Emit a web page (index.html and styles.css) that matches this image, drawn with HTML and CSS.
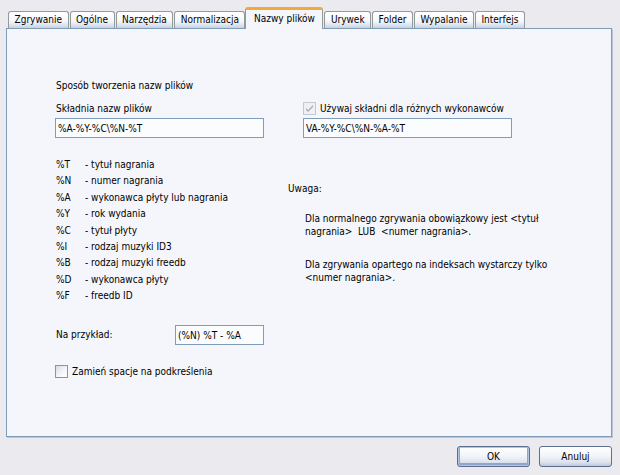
FILE: index.html
```html
<!DOCTYPE html>
<html lang="pl">
<head>
<meta charset="utf-8">
<title>Nazwy plików</title>
<link rel="stylesheet" href="styles.css">
</head>
<body>
<div class="dialog">
  <div class="tabs">
    <div class="tab">Zgrywanie</div>
    <div class="tab">Ogólne</div>
    <div class="tab">Narzędzia</div>
    <div class="tab">Normalizacja</div>
    <div class="tab active">Nazwy plików</div>
    <div class="tab">Urywek</div>
    <div class="tab">Folder</div>
    <div class="tab">Wypalanie</div>
    <div class="tab">Interfejs</div>
  </div>
  <div class="panel">
    <div class="title">Sposób tworzenia nazw plików</div>
    <div class="syntax">
      <div class="col">
        <div class="label">Składnia nazw plików</div>
        <div class="input">%A-%Y-%C\%N-%T</div>
      </div>
      <div class="col">
        <div class="check">
          <span class="box checked"><svg width="11" height="11" viewBox="0 0 11 11"><path d="M2 5 L4 7 L9 2 L9 4 L4 9 L2 7 Z" fill="#a9b0ba"/></svg></span>
          <span class="check-text">Używaj składni dla różnych wykonawców</span>
        </div>
        <div class="input">VA-%Y-%C\%N-%A-%T</div>
      </div>
    </div>
    <div class="info">
      <ul class="codes">
        <li><span class="code">%T</span><span>- tytuł nagrania</span></li>
        <li><span class="code">%N</span><span>- numer nagrania</span></li>
        <li><span class="code">%A</span><span>- wykonawca płyty lub nagrania</span></li>
        <li><span class="code">%Y</span><span>- rok wydania</span></li>
        <li><span class="code">%C</span><span>- tytuł płyty</span></li>
        <li><span class="code">%I</span><span>- rodzaj muzyki ID3</span></li>
        <li><span class="code">%B</span><span>- rodzaj muzyki freedb</span></li>
        <li><span class="code">%D</span><span>- wykonawca płyty</span></li>
        <li><span class="code">%F</span><span>- freedb ID</span></li>
      </ul>
      <div class="notes">
        <p class="note-title">Uwaga:</p>
        <p class="note">Dla normalnego zgrywania obowiązkowy jest &lt;tytuł<br>nagrania&gt;&nbsp; LUB &nbsp;&lt;numer nagrania&gt;.</p>
        <p class="note second">Dla zgrywania opartego na indeksach wystarczy tylko<br>&lt;numer nagrania&gt;.</p>
      </div>
    </div>
    <div class="example">
      <span class="ex-label">Na przykład:</span>
      <div class="input small">(%N) %T - %A</div>
    </div>
    <div class="check bottom">
      <span class="box"></span>
      <span class="check-text">Zamień spacje na podkreślenia</span>
    </div>
  </div>
  <div class="buttons">
    <button class="btn default">OK</button>
    <button class="btn">Anuluj</button>
  </div>
</div>
</body>
</html>
```

FILE: styles.css
```css
* { box-sizing: border-box; }
html, body {
  margin: 0;
  padding: 0;
  background: #ebeaee;
}
body {
  font-family: "DejaVu Sans Condensed", "Liberation Sans", Arial, sans-serif;
  font-size: 10px;
  line-height: 13px;
  color: #000;
}
.dialog {
  width: 620px;
  height: 475px;
  display: flex;
  flex-direction: column;
}
.tabs {
  display: flex;
  align-items: flex-end;
  gap: 1px;
  height: 21px;
  margin-top: 7px;
  padding-left: 8px;
  position: relative;
  z-index: 1;
}
.tab {
  height: 17px;
  padding: 1px 5.5px 0;
  border: 1px solid #919b9c;
  border-bottom: none;
  border-radius: 3px 3px 0 0;
  background: linear-gradient(#ffffff, #f7f8fb 55%, #dfe5f0 80%, #c6d1e4);
  white-space: nowrap;
  line-height: 14px;
  text-align: center;
}
.tab.active {
  height: 22px;
  margin: 0 0 -1px -1px;
  padding: 2px 7.5px 0;
  border-top: 3px solid #f3a83a;
  background: #f5f6fb;
}
.panel {
  height: 409px;
  margin: 0 8px 0 6px;
  border: 1px solid #7f9db9;
  box-shadow: 1px 1px 0 #b9c5d8;
  background: #f5f6fb;
  padding: 50px 0 0 48px;
}
.title { height: 13px; padding-left: 1px; }
.syntax {
  display: flex;
  gap: 39px;
  margin-top: 10px;
}
.col { width: 209px; }
.label { height: 13px; padding-left: 1px; }
.input {
  height: 20px;
  margin-top: 3px;
  border: 1px solid #7f9db9;
  background: #fbfcfe;
  padding: 2px 2px 0;
  line-height: 15px;
  white-space: nowrap;
}
.check {
  display: flex;
  align-items: center;
  gap: 3px;
  height: 13px;
  white-space: nowrap;
}
.box {
  flex: none;
  width: 13px;
  height: 13px;
  border: 1px solid #8296b3;
  background: linear-gradient(135deg, #d8dbe2, #f6f7f9 60%, #ffffff);
  display: flex;
  align-items: center;
  justify-content: center;
}
.box.checked {
  border-color: #c4c9d0;
  background: #eef0f4;
}
.check-text { padding-left: 1px; }
.info {
  display: flex;
  margin-top: 19px;
}
.codes {
  list-style: none;
  margin: 0;
  padding: 0;
  width: 233px;
}
.codes li {
  display: flex;
  height: 16.4px;
  line-height: 16.4px;
  padding-left: 1px;
}
.code { width: 29px; }
.notes { padding-top: 24.5px; }
.notes p { margin: 0; }
.notes .note { margin-top: 17px; padding-left: 17px; }
.notes .note.second { margin-top: 20px; }
.example {
  display: flex;
  align-items: center;
  margin-top: 20px;
}
.ex-label { width: 120px; padding-left: 1px; }
.input.small { width: 89px; margin-top: 0; }
.check.bottom { margin-top: 20px; }
.buttons {
  display: flex;
  justify-content: flex-end;
  gap: 9px;
  margin-top: 9px;
  padding-right: 8px;
}
.btn {
  width: 73px;
  height: 21px;
  font-family: "DejaVu Sans Condensed", "Liberation Sans", Arial, sans-serif;
  font-size: 10px;
  color: #000;
  border: 1px solid #5d6f8e;
  border-radius: 3px;
  background: linear-gradient(#ffffff, #f3f5f9 45%, #dde3ee 80%, #bcc6d9);
  padding: 0;
}
.btn.default {
  box-shadow: inset 0 0 0 1px #b3c4e3, inset 0 -1px 0 2px #8ea5cc;
}
```
